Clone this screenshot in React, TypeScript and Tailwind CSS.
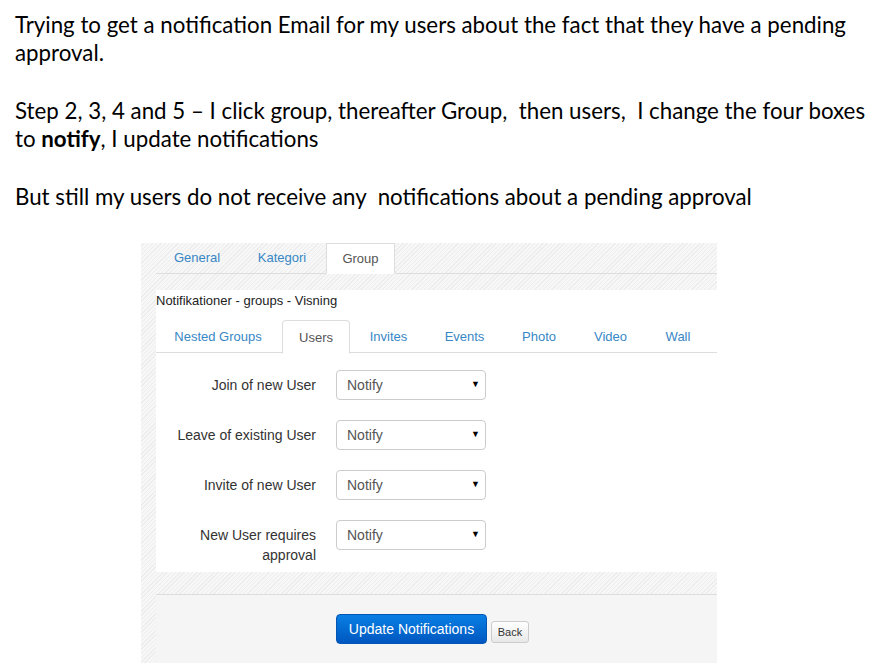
import React from 'react';

const hatch =
  'bg-[image:repeating-linear-gradient(135deg,#f7f7f7_0px,#f7f7f7_2px,#ededed_2px,#ededed_3px)]';

const topTabs = [
  { t: 'General', w: 'w-[82px]' },
  { t: 'Kategori', w: 'w-[84px]' },
  { t: 'Group', w: 'w-[69px]' },
];
const subTabs = [
  { t: 'Nested Groups', w: 'w-[124px]' },
  { t: 'Users', w: 'w-[68px]' },
  { t: 'Invites', w: 'w-[73px]' },
  { t: 'Events', w: 'w-[75px]' },
  { t: 'Photo', w: 'w-[70px]' },
  { t: 'Video', w: 'w-[69px]' },
  { t: 'Wall', w: 'w-[62px]' },
];

const rows: { label: React.ReactNode }[] = [
  { label: 'Join of new User' },
  { label: 'Leave of existing User' },
  { label: 'Invite of new User' },
  { label: <>New User requires<br />approval</> },
];

const NotifySelect: React.FC = () => (
  <div className="w-[150px] h-[30px] border border-[#cccccc] rounded-[4px] bg-white flex items-center justify-between pl-[10px] pr-[5px] text-[14px] text-[#555555]">
    <span>Notify</span>
    <span className="text-[9px] text-black">▼</span>
  </div>
);

const App: React.FC = () => {
  return (
    <div className="w-[887px] h-[663px] overflow-hidden bg-white">
      <div className="pl-[15px] pt-[11px] text-[22.3px] leading-[28px] text-black font-['Lato',sans-serif] whitespace-nowrap">
        <p>Trying to get a notification Email for my users about the fact that they have a pending<br />approval.</p>
        <p className="mt-[30px]">Step 2, 3, 4 and 5 – I click group, thereafter Group,&nbsp; then users,&nbsp; I change the four boxes<br />to <b>notify</b>, I update notifications</p>
        <p className="mt-[30px]">But still my users do not receive any&nbsp; notifications about a pending approval</p>
      </div>

      <div className={`ml-[141px] mt-[32px] w-[576px] h-[440px] pl-[15px] ${hatch} font-['Liberation_Sans',Arial,sans-serif]`}>
        {/* top tabs */}
        <div className="flex h-[31px] border-b border-[#dddddd]">
          {topTabs.map(({ t, w }) => (
            <div
              key={t}
              className={`${w} mr-[2px] text-[13px] flex items-center justify-center ${
                t === 'Group'
                  ? 'bg-white border border-[#dddddd] border-b-white h-[31px] text-[#555555]'
                  : 'text-[#3887c6] h-[30px]'
              }`}
            >
              {t}
            </div>
          ))}
        </div>

        <div className="h-[16px]" />

        {/* panel */}
        <div className="bg-white h-[282px]">
          <div className="pt-[2px] text-[13px] leading-[18px] text-[#222222]">Notifikationer - groups - Visning</div>
          <div className="mt-[10px] flex h-[33px] border-b border-[#dddddd]">
            {subTabs.map(({ t, w }) => (
              <div
                key={t}
                className={`${w} mr-[2px] text-[13px] pt-[1px] flex items-center justify-center ${
                  t === 'Users'
                    ? 'bg-white border border-[#dddddd] border-b-white rounded-t-[4px] h-[34px] text-[#555555]'
                    : 'text-[#3887c6] h-[33px]'
                }`}
              >
                {t}
              </div>
            ))}
          </div>

          <div className="pt-[17px] flex flex-col gap-[20px]">
            {rows.map((r, i) => (
              <div key={i} className="flex items-start gap-[20px]">
                <div className="w-[160px] text-right text-[14px] leading-[20px] text-[#333333] pt-[5px]">{r.label}</div>
                <NotifySelect />
              </div>
            ))}
          </div>
        </div>

        <div className="h-[22px]" />

        {/* footer */}
        <div className="bg-[#f5f5f5] border-t border-[#dddddd] h-[80px] flex items-start pt-[19px] pl-[180px]">
          <button className="w-[151px] h-[30px] rounded-[4px] text-white text-[14px] bg-gradient-to-b from-[#0b7fe4] to-[#0057c0] border border-[#0456b4]">
            Update Notifications
          </button>
          <button className="ml-[4px] mt-[7px] w-[38px] h-[22px] rounded-[3px] text-[11px] text-[#333333] border border-[#cccccc] bg-gradient-to-b from-white to-[#e8e8e8]">
            Back
          </button>
        </div>
      </div>
    </div>
  );
};

export default App;
